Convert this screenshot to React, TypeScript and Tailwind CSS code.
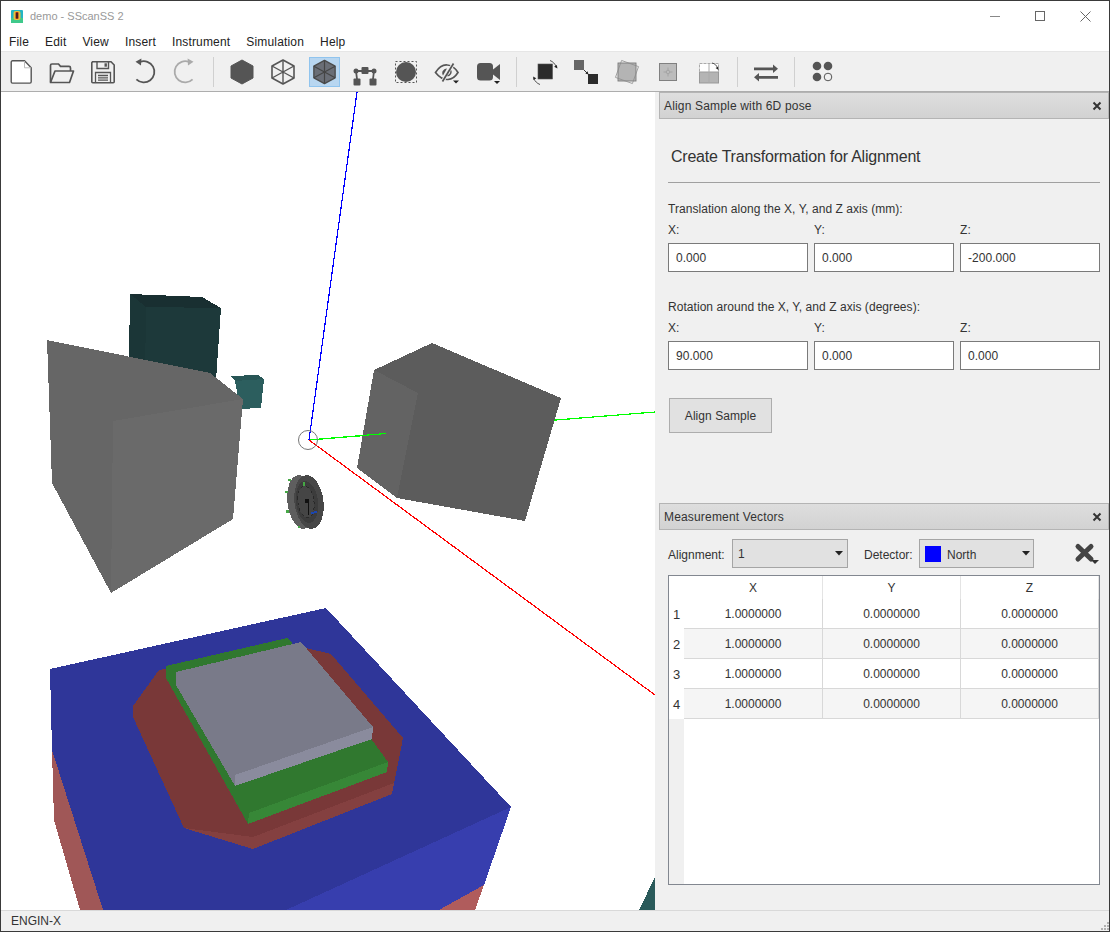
import React from "react";

const S = "#555555";

function Ico({ children }: { children: React.ReactNode }) {
  return (
    <svg width="30" height="30" viewBox="0 0 30 30" className="block">
      {children}
    </svg>
  );
}

const Caret = ({ x, y }: { x: number; y: number }) => (
  <polygon points={`${x - 3},${y} ${x + 3},${y} ${x},${y + 3}`} fill="#222" />
);

const icons: React.ReactNode[] = [
  <Ico>
    <path d="M6.500 3.800h12l6.700 7v14a1.300 1.300 0 0 1-1.300 1.300H6.500a1.300 1.300 0 0 1-1.300-1.300V5.100a1.300 1.300 0 0 1 1.300-1.300z" fill="#fff" stroke={S} strokeWidth="1.400" />
    <path d="M18.500 4v6.800h6.600" fill="none" stroke="#bbb" strokeWidth="1" />
  </Ico>,
  <Ico>
    <path d="M3.500 25V8.500A1.500 1.500 0 0 1 5 7h6.500l2 2.400h8.500a1.500 1.500 0 0 1 1.500 1.500V14" fill="none" stroke={S} strokeWidth="1.700" />
    <path d="M3.500 25.500L8 14h18.500l-4 11.500z" fill="none" stroke={S} strokeWidth="1.700" strokeLinejoin="round" />
  </Ico>,
  <Ico>
    <path d="M4.500 4.800h18.500l3.200 3.200v16.700a1 1 0 0 1-1 1H4.800a1 1 0 0 1-1-1V5.800z" fill="none" stroke={S} strokeWidth="1.600" />
    <path d="M9 5v6.500h11.500V5" fill="none" stroke={S} strokeWidth="1.400" />
    <rect x="16.500" y="6.300" width="2.400" height="3.400" fill={S} />
    <path d="M7.500 25.500v-10h15v10M10 18.500h10M10 20.800h10M10 23.100h10" fill="none" stroke={S} strokeWidth="1.300" />
  </Ico>,
  <Ico>
    <path d="M11 4.900A10.600 10.600 0 1 1 7.400 22.400" fill="none" stroke={S} strokeWidth="1.800" />
    <path d="M12.400 1.400L6.500 4.800l5.500 3.600z" fill={S} />
  </Ico>,
  <Ico>
    <path d="M19 4.900A10.600 10.600 0 1 0 22.600 22.400" fill="none" stroke="#aaaaaa" strokeWidth="1.800" />
    <path d="M17.600 1.400l5.900 3.400-5.500 3.600z" fill="#aaaaaa" />
  </Ico>,
  null,
  <Ico>
    <polygon points="15,3 26,9 26,21 15,27 4,21 4,9" fill={S} stroke={S} strokeLinejoin="round" />
  </Ico>,
  <Ico>
    <polygon points="15,3 26,9 26,21 15,27 4,21 4,9" fill="none" stroke={S} strokeWidth="1.600" strokeLinejoin="round" />
    <path d="M4 9l22 12M26 9L4 21M15 3v24" fill="none" stroke={S} strokeWidth="1.400" />
  </Ico>,
  <Ico>
    <polygon points="15,3 26,9 26,21 15,27 4,21 4,9" fill="#6a6e76" stroke="#4a4a4a" strokeWidth="1.400" strokeLinejoin="round" />
    <path d="M4 9l22 12M26 9L4 21M15 3v24" fill="none" stroke="#454545" strokeWidth="1.200" />
  </Ico>,
  <Ico>
    <path d="M6 14l1 8M24 14l-1 8M6 14h18" fill="none" stroke={S} strokeWidth="1.800" />
    <rect x="11.500" y="10" width="7" height="7" rx="1" fill={S} />
    <circle cx="6" cy="14" r="2.500" fill={S} />
    <circle cx="24" cy="14" r="2.500" fill={S} />
    <rect x="3.500" y="21.500" width="7" height="7" rx="1" fill={S} />
    <rect x="19.500" y="21.500" width="7" height="7" rx="1" fill={S} />
  </Ico>,
  <Ico>
    <rect x="4.500" y="4.500" width="21" height="21" fill="none" stroke={S} strokeWidth="1" strokeDasharray="2 2" />
    <circle cx="15" cy="15" r="10" fill={S} />
  </Ico>,
  <Ico>
    <path d="M3.500 15.500C7 10 11.500 7.500 15.500 8c4.500.3 8 3.500 10.500 7.500-2.500 4-6 6.800-10 7-5 .3-9-2.500-12.500-7z" fill="none" stroke={S} strokeWidth="1.700" />
    <path d="M10.500 14.500c1-2 2.500-3 4.500-3l-4 7c-.8-1.200-1-2.500-.5-4z" fill={S} />
    <path d="M21.500 6.500L10.500 24.500" stroke="#f0f0f0" strokeWidth="3.400" />
    <path d="M21.500 6.500L10.500 24.500" stroke={S} strokeWidth="1.700" />
    <path d="M19 13.500c.3 2.500-1 4.500-3.500 5.500" fill="none" stroke={S} strokeWidth="1.300" />
    <Caret x={24} y={23.500} />
  </Ico>,
  <Ico>
    <rect x="4" y="6" width="16" height="17.500" rx="3.500" fill={S} />
    <polygon points="20,12.500 27,7 27,23 20,17.500" fill={S} />
    <Caret x={24} y={24} />
  </Ico>,
  null,
  <Ico>
    <rect x="8" y="7" width="14.500" height="15" fill="#2b2b2b" stroke="#555" strokeWidth=".6" />
    <path d="M20 3.500c3 1 5 3.500 6.500 6.500" fill="none" stroke="#555" strokeWidth="1" />
    <path d="M27.500 11.500l-3.400-1.800 2.700-1.700z" fill="#222" />
    <path d="M10 27.500c-3-1-5-3.500-6.500-6" fill="none" stroke="#555" strokeWidth="1" />
    <path d="M3 19.500l3.300 1.800-2.600 1.800z" fill="#222" />
  </Ico>,
  <Ico>
    <rect x="3" y="3" width="10" height="10" fill="#666" />
    <rect x="17" y="17" width="10" height="10" fill="#2b2b2b" />
    <path d="M13 13l3.500 3.500" stroke="#333" strokeWidth="1" />
    <path d="M17.500 17.500l-3.200-1 2.200-2.200z" fill="#222" />
  </Ico>,
  <Ico>
    <rect x="6" y="6" width="18" height="18" fill="#b4b4b4" stroke="#7a7a7a" strokeWidth=".9" />
    <rect x="6" y="6" width="18" height="18" fill="none" stroke="#8a8a8a" strokeWidth=".7" transform="rotate(20 15 15)" />
  </Ico>,
  <Ico>
    <rect x="6.500" y="6.500" width="17" height="17" fill="#bcbcbc" stroke="#808080" strokeWidth="1" />
    <circle cx="15" cy="15" r="1.800" fill="none" stroke="#a0a0a0" strokeWidth=".8" />
    <path d="M15 10.500v3M15 16.500v3M10.500 15h3M16.500 15h3" stroke="#a0a0a0" strokeWidth=".8" />
  </Ico>,
  <Ico>
    <rect x="5.500" y="6.500" width="19" height="19" fill="#fff" stroke="#aaa" strokeWidth="1" strokeDasharray="3 1" />
    <rect x="5.500" y="15" width="19" height="11" fill="#b4b4b4" stroke="#999" strokeWidth="1" />
    <path d="M15 6.500v19" stroke="#aaa" strokeWidth="1" />
    <path d="M18 6c3 .6 4.600 2.400 5.500 5" fill="none" stroke="#555" strokeWidth="1" />
    <path d="M24.500 13l-2.900-1.900 2.600-1.400z" fill="#222" />
  </Ico>,
  null,
  <Ico>
    <path d="M3 10.500h19V7.500l5 4.300-5 4.200v-2.800H3z" fill={S} />
    <path d="M27 19H8v-3l-5 4.300 5 4.200v-2.800h19z" fill={S} />
  </Ico>,
  null,
  <Ico>
    <circle cx="9" cy="9" r="4.300" fill={S} />
    <circle cx="20" cy="9" r="4.300" fill={S} />
    <circle cx="9" cy="20" r="4.300" fill={S} />
    <circle cx="20" cy="20" r="3.800" fill="none" stroke={S} strokeWidth="1" />
  </Ico>,
];

function Viewport() {
  return (
    <svg viewBox="1 92 654 818" shapeRendering="crispEdges" className="block w-[654px] h-[818px] bg-white">
      {/* dark teal block */}
      <polygon points="130,294 202,297 221,308 216,380 129,380 129,357" fill="#1b3637" />
      <polygon points="146,307 221,308 216,380 145,380" fill="#1d393a" />
      <polygon points="130,294 202,297 221,308 146,307" fill="#192f31" />
      {/* small teal cube */}
      <polygon points="230,376 258,375 264,379 261,408 240,409 235,381" fill="#2c5e5e" />
      <polygon points="230,376 258,375 264,379 235,381" fill="#285656" />
      {/* left gray cube */}
      <polygon points="47,340 113,421 111,593 52,483" fill="#666666" />
      <polygon points="47,340 210,373 243,399 113,421" fill="#666666" />
      <polygon points="113,421 243,399 233,519 111,593" fill="#6a6a6a" />
      {/* axes behind the right cube */}
      <line x1="309" y1="440" x2="655" y2="412" stroke="#00ff00" strokeWidth="1.200" />
      {/* right gray cube */}
      <polygon points="374,370 432,343 561,398 525,521 397,498 357,468" fill="#5c5c5c" />
      <polygon points="374,370 418,393 397,498 357,468" fill="#636363" />
      <line x1="309" y1="440" x2="386" y2="433.500" stroke="#00ff00" strokeWidth="1.200" />
      {/* axes */}
      <line x1="357" y1="92" x2="309" y2="440" stroke="#0000ff" strokeWidth="1.200" />
      <line x1="309" y1="440" x2="655" y2="695" stroke="#ff0000" strokeWidth="1.200" />
      <circle cx="308" cy="440" r="9.500" fill="none" stroke="#777" strokeWidth="1" shapeRendering="auto" />
      {/* sample wheel */}
      <ellipse cx="301" cy="502" rx="13.500" ry="27" transform="rotate(-7 301 502)" fill="#5e5e5e" />
      <ellipse cx="309" cy="502" rx="14.500" ry="27" transform="rotate(-7 309 502)" fill="#474747" />
      <ellipse cx="307" cy="502" rx="11" ry="21" transform="rotate(-7 307 502)" fill="#3c3c3c" />
      <ellipse cx="306" cy="502" rx="8" ry="16" transform="rotate(-7 306 502)" fill="#454545" stroke="#1f1f1f" strokeWidth=".7" strokeDasharray="3 3" />
      <rect x="305" y="499" width="4" height="4" fill="#111" />
      <line x1="308" y1="500" x2="309" y2="515" stroke="#111" strokeWidth="1" />
      <path d="M311 513l6-1" stroke="#1b46b0" strokeWidth="2" />
      <g fill="#45a845">
        <rect x="288" y="479" width="3" height="2" />
        <rect x="303" y="482" width="2" height="4" />
        <rect x="285" y="491" width="3" height="2" />
        <rect x="286" y="510" width="3" height="3" />
        <rect x="298" y="526" width="2" height="2" />
      </g>
      {/* base block */}
      <polygon points="52,750 103,910 80,910 54,820" fill="#a05757" />
      <polygon points="50,669 326,608 511,807 286,910 103,910 52,750" fill="#2f3699" />
      <polygon points="511,807 286,910 439,910 484,885" fill="#373eae" />
      <polygon points="484,885 439,910 475,910" fill="#b05c5c" />
      {/* maroon plate */}
      <polygon points="159,670 306,648 331,654 403,738 392,794 253,849 184,828 133,717 133,706" fill="#793838" />
      <polygon points="184,828 253,837 394,783 392,794 253,849" fill="#844040" />
      {/* green plate */}
      <polygon points="166,666 287,638 292,643 372,740 388,762 387,772 248,824 166,678" fill="#30782f" />
      <polygon points="249,813 388,762 387,772 248,824" fill="#378737" />
      {/* gray plate */}
      <polygon points="176,672 301,642 373,727 371,739 235,786 176,685" fill="#797a89" />
      <polygon points="235,775 373,727 372,739 235,786" fill="#8a8b9d" />
      {/* bottom right teal */}
      <polygon points="655,877 639,910 655,910" fill="#2a5a5a" />
    </svg>
  );
}

const XIcon = () => (
  <svg width="10" height="10" viewBox="0 0 10 10" className="block">
    <path d="M1.500 1.500l7 7M8.500 1.500l-7 7" stroke="#333" strokeWidth="2" />
  </svg>
);

function DockTitle({ text }: { text: string }) {
  return (
    <div className="ml-[4px] h-[27px] flex items-center justify-between pl-[4px] pr-[6px] border border-[#b4b4b4] bg-gradient-to-b from-[#dedede] to-[#d2d2d2] text-[12px] tracking-[0.17px] text-[#333]">
      <span>{text}</span>
      <XIcon />
    </div>
  );
}

function Vec({ labels, values }: { labels: string[]; values: string[] }) {
  return (
    <>
      <div className="mt-[7px] flex gap-[6px]">
        {labels.map((l) => (
          <div key={l} className="w-[140px] h-[14px] leading-[16px]">{l}</div>
        ))}
      </div>
      <div className="mt-[7px] flex gap-[6px]">
        {values.map((v, i) => (
          <div key={i} className="w-[140px] h-[29px] leading-[29px] bg-white border border-[#7a7a7a] pl-[7px]">{v}</div>
        ))}
      </div>
    </>
  );
}

const SelectCaret = () => (
  <svg width="8" height="5" viewBox="0 0 8 5" className="block"><polygon points="0,0 8,0 4,4.500" fill="#222" /></svg>
);

const rows = [1, 2, 3, 4];

export default function App() {
  return (
    <div className="w-[1110px] h-[932px] flex flex-col border border-[#3a3a3a] bg-white font-['Liberation_Sans',Arial,sans-serif] text-[12px] text-[#333] overflow-hidden">
      {/* Title bar */}
      <div className="h-[30px] flex items-center bg-white">
        <svg width="12" height="13" viewBox="0 0 12 13" className="ml-[10px] block">
          <rect width="12" height="13" rx="1" fill="#22b5c4" />
          <rect x="0" y="8" width="12" height="5" fill="#3fc98b" />
          <rect x="2.500" y="1" width="7" height="9" rx="2" fill="#e6c13a" />
          <rect x="4.500" y="2" width="3" height="7" rx="1" fill="#a8221d" />
          <rect x="5.300" y="3" width="1.400" height="5" fill="#222" />
        </svg>
        <span className="ml-[7px] text-[11px] text-[#999]">demo - SScanSS 2</span>
        <div className="ml-auto flex items-center mr-[18px] gap-[35px]">
          <svg width="10" height="10" viewBox="0 0 10 10" className="block"><path d="M0 5.500h10" stroke="#888" /></svg>
          <svg width="10" height="10" viewBox="0 0 10 10" className="block"><rect x=".5" y=".5" width="9" height="9" fill="none" stroke="#666" /></svg>
          <svg width="11" height="11" viewBox="0 0 11 11" className="block"><path d="M.5.5l10 10M10.500.5l-10 10" stroke="#666" /></svg>
        </div>
      </div>
      {/* Menu */}
      <div className="h-[20px] flex items-center gap-[16px] pl-[8px] pt-[2px] bg-white text-[#222] tracking-[0.17px]">
        {["File", "Edit", "View", "Insert", "Instrument", "Simulation", "Help"].map((m) => (
          <span key={m}>{m}</span>
        ))}
      </div>
      {/* Toolbar */}
      <div className="h-[41px] flex items-center bg-[#f0f0f0] border-t border-t-[#e6e6e6] border-b border-b-[#adadad]">
        {icons.map((ic, i) =>
          ic === null ? (
            <div key={i} className="w-[16px] h-[30px] flex justify-center shrink-0">
              <div className="w-px h-full bg-[#d0d0d0]" />
            </div>
          ) : (
            <div key={i} className={(i === 0 ? "-ml-[1px] " : "") + "w-[41px] flex justify-center shrink-0"}>
              <div className={i === 8 ? "ml-[1px] w-[31px] h-[30px] flex items-center justify-center bg-[#b8d6f0] border border-[#90c4ee]" : "w-[30px] h-[30px]"}>
                {ic}
              </div>
            </div>
          )
        )}
      </div>
      {/* Main */}
      <div className="flex-1 flex min-h-0">
        <Viewport />
        <div className="w-[454px] bg-[#f0f0f0] flex flex-col">
          <DockTitle text="Align Sample with 6D pose" />
          <div className="pl-[13px] pr-[9px] tracking-[0.05px]">
            <div className="mt-[28px] ml-[3px] h-[20px] leading-[20px] text-[16px] tracking-[-0.22px]">Create Transformation for Alignment</div>
            <div className="mt-[15px] h-px bg-[#a0a0a0]" />
            <div className="mt-[18px] h-[14px] leading-[16px]">Translation along the X, Y, and Z axis (mm):</div>
            <Vec labels={["X:", "Y:", "Z:"]} values={["0.000", "0.000", "-200.000"]} />
            <div className="mt-[27px] h-[14px] leading-[16px]">Rotation around the X, Y, and Z axis (degrees):</div>
            <Vec labels={["X:", "Y:", "Z:"]} values={["90.000", "0.000", "0.000"]} />
            <div className="mt-[28px] ml-[1px] w-[103px] h-[35px] flex items-center justify-center bg-[#e1e1e1] border border-[#adadad]">Align Sample</div>
          </div>
          <div className="mt-[70px]">
            <DockTitle text="Measurement Vectors" />
          </div>
          <div className="pl-[13px] pr-[9px]">
            <div className="mt-[9px] h-[29px] flex items-center">
              <span className="w-[64px] pt-[2px]">Alignment:</span>
              <div className="w-[116px] h-[29px] flex items-center justify-between pl-[5px] pr-[4px] bg-[#e1e1e1] border border-[#a5a5a5]">
                <span className="pt-[1px]">1</span>
                <SelectCaret />
              </div>
              <span className="ml-[16px] w-[55px] pt-[2px]">Detector:</span>
              <div className="w-[115px] h-[29px] flex items-center pl-[5px] pr-[3px] bg-[#e1e1e1] border border-[#a5a5a5]">
                <span className="w-[16px] h-[16px] bg-[#0000ff]" />
                <span className="ml-[6px] pt-[2px]">North</span>
                <span className="ml-auto"><SelectCaret /></span>
              </div>
              <svg width="25" height="24" viewBox="0 0 25 24" className="ml-[40px] block">
                <path d="M4 4.500l13 12.500M17 4.500L4 17" stroke="#444" strokeWidth="5" strokeLinecap="round" />
                <polygon points="17,18 25,18 21,22" fill="#333" />
              </svg>
            </div>
            <div className="mt-[7px] h-[310px] border border-[#828790] bg-white flex flex-col">
              <div className="h-[23px] flex shrink-0">
                <div className="w-[15px] shrink-0" />
                {["X", "Y", "Z"].map((h, i) => (
                  <div key={h} className={(i === 0 ? "w-[139px]" : "w-[138px]") + " flex items-center justify-center border-r border-r-[#e4e4e4]"}>
                    {h}
                  </div>
                ))}
              </div>
              {rows.map((r) => (
                <div key={r} className="h-[30px] flex shrink-0">
                  <div className="w-[15px] shrink-0 flex items-center justify-center pt-[1px] text-[13px]">{r}</div>
                  {["1.0000000", "0.0000000", "0.0000000"].map((v, i) => (
                    <div
                      key={i}
                      className={
                        (i === 0 ? "w-[139px]" : "w-[138px]") +
                        (r % 2 === 0 ? " bg-[#f5f5f5]" : " bg-white") +
                        " flex items-center justify-center border-r border-b border-[#d8d8d8]"
                      }
                    >
                      {v}
                    </div>
                  ))}
                </div>
              ))}
              <div className="flex-1 w-[15px] bg-[#f0f0f0]" />
            </div>
          </div>
        </div>
      </div>
      {/* Status bar */}
      <div className="h-[21px] flex items-center justify-between pl-[10px] bg-[#f0f0f0] border-t border-t-[#d9d9d9]">
        <span>ENGIN-X</span>
        <svg width="9" height="9" viewBox="0 0 9 9" className="block self-end mb-[1px]">
          <g fill="#b0b0b0">
            <rect x="7" y="1" width="2" height="2" />
            <rect x="4" y="4" width="2" height="2" />
            <rect x="7" y="4" width="2" height="2" />
            <rect x="1" y="7" width="2" height="2" />
            <rect x="4" y="7" width="2" height="2" />
            <rect x="7" y="7" width="2" height="2" />
          </g>
        </svg>
      </div>
    </div>
  );
}
